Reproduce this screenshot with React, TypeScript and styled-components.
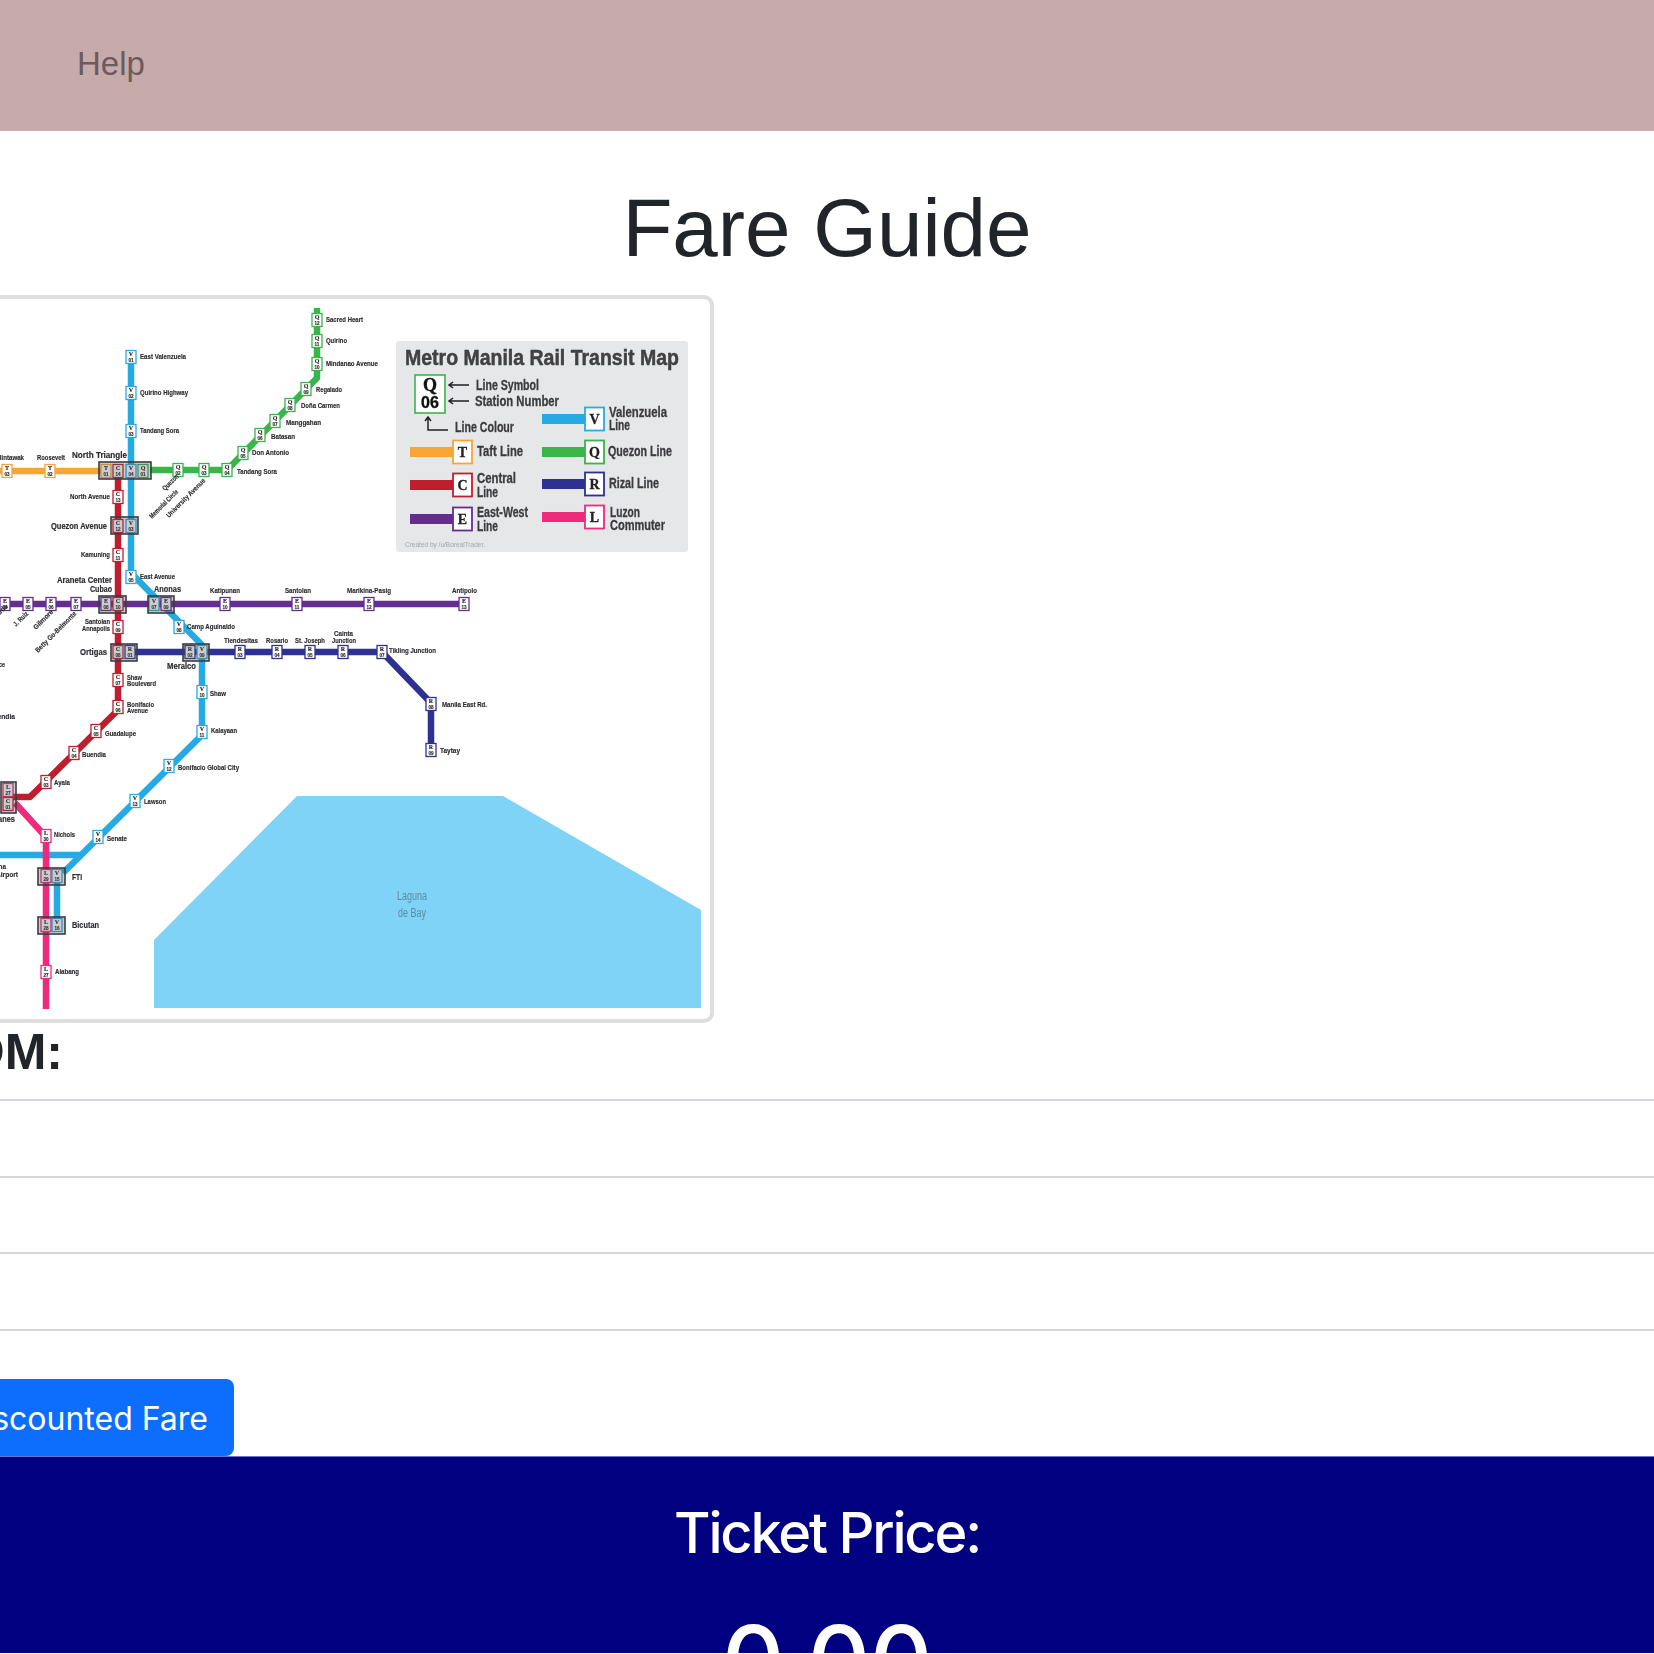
import React from 'react';
import styled, { createGlobalStyle } from 'styled-components';

const colors = {
  T: '#f9a533',
  C: '#be1e2d',
  E: '#662d91',
  V: '#27aae1',
  Q: '#39b54a',
  R: '#2e3192',
  L: '#ee2a7b',
};
type LineKey = keyof typeof colors;

const GlobalStyle = createGlobalStyle`
  html, body {
    margin: 0;
    padding: 0;
    background: #fff;
    overflow: hidden;
  }
`;

const Page = styled.div`
  width: 1654px;
  height: 1653px;
  overflow: hidden;
  display: flex;
  flex-direction: column;
  font-family: 'Inter', 'Liberation Sans', sans-serif;
  color: #212529;
`;

const Header = styled.header`
  flex: none;
  box-sizing: border-box;
  height: 131px;
  display: flex;
  align-items: center;
  padding: 0 0 4px 77px;
  background: #c7abab;
`;

const HelpLink = styled.a`
  font-family: 'Liberation Sans', sans-serif;
  font-size: 33px;
  color: #6d5a5b;
`;

const Title = styled.h1`
  flex: none;
  box-sizing: border-box;
  height: 164px;
  margin: 0;
  padding-top: 29px;
  display: flex;
  align-items: center;
  justify-content: center;
  font-family: 'Liberation Sans', sans-serif;
  font-size: 81.8px;
  font-weight: 400;
`;

const FormArea = styled.section`
  flex: none;
  width: 1748px;
  margin-left: -94px;
`;

const MapCard = styled.div`
  box-sizing: border-box;
  width: 808px;
  height: 728px;
  border: 4px solid #dedede;
  border-radius: 10px;
  background: #fff;
  overflow: hidden;
`;

const MapDrawing = styled.svg`
  display: block;
  width: 800px;
  height: 720px;
  filter: blur(0.4px);
`;

const MapLabel = styled.text<{ $size?: number; $weight?: number; $serif?: boolean; $color?: string }>`
  font-family: ${(p) => (p.$serif ? "'Liberation Serif', serif" : "'Liberation Sans', sans-serif")};
  font-size: ${(p) => p.$size ?? 7}px;
  font-weight: ${(p) => p.$weight ?? 700};
  fill: ${(p) => p.$color ?? '#2c2c30'};
  stroke: ${(p) => p.$color ?? '#2c2c30'};
  stroke-width: ${(p) => ((p.$weight ?? 700) > 400 ? (p.$size ?? 7) * 0.022 : 0)}px;
`;

const FromLabel = styled.label`
  display: flex;
  justify-content: flex-end;
  align-items: center;
  box-sizing: border-box;
  width: 157px;
  height: 76px;
  padding: 0 0 18px;
  font-family: 'Liberation Sans', sans-serif;
  font-size: 50px;
  font-weight: 700;
  line-height: 1;
`;

const FareField = styled.div<{ $closing?: boolean }>`
  height: ${(p) => (p.$closing ? 0 : 74.5)}px;
  border-top: 2px solid #d5d5df;
`;

const ButtonRow = styled.div`
  display: flex;
  justify-content: flex-end;
  width: 328px;
  margin-top: 48px;
`;

const DiscountButton = styled.button`
  height: 77px;
  padding: 2px 26px 0 27px;
  border: none;
  border-radius: 8px;
  background: #0d6efd;
  color: #fff;
  font-family: 'Inter', 'Liberation Sans', sans-serif;
  font-size: 32px;
  white-space: nowrap;
`;

const PriceBar = styled.footer`
  flex: 1;
  display: flex;
  flex-direction: column;
  align-items: center;
  border-top: 1px solid #6f6fc4;
  background: #000080;
  color: #fff;
`;

const PriceCaption = styled.h2`
  margin: 40px 0 0;
  font-size: 56px;
  font-weight: 550;
  line-height: 72px;
  letter-spacing: -2.2px;
`;

const PriceValue = styled.div`
  margin-top: 34px;
  font-size: 97px;
  font-weight: 500;
  line-height: 116px;
  letter-spacing: -0.5px;
`;

const paths: { key: LineKey; pts: string }[] = [
  { key: 'V', pts: '131,357 131,573 202,645 202,735 63,873' },
  { key: 'V', pts: '-10,855 80,855' },
  { key: 'V', pts: '57,873 57,925' },
  { key: 'T', pts: '-10,471 110,471' },
  { key: 'Q', pts: '317,308 317,378 227,470 150,470' },
  { key: 'E', pts: '-10,604 464,604' },
  { key: 'R', pts: '130,652 382,652 431,703 431,750' },
  { key: 'C', pts: '118,470 118,710 30,797 8,797' },
  { key: 'L', pts: '15,803 46,837 46,1009' },
];

const stations: [LineKey, string, number, number][] = [
  ['V', '01', 131, 357],
  ['V', '02', 131, 393],
  ['V', '03', 131, 431],
  ['V', '05', 131, 577],
  ['V', '08', 179, 627],
  ['V', '10', 202, 692],
  ['V', '11', 202, 732],
  ['V', '12', 169, 766],
  ['V', '13', 135, 801],
  ['V', '14', 98, 837],
  ['Q', '12', 317, 320],
  ['Q', '11', 317, 341],
  ['Q', '10', 317, 364],
  ['Q', '09', 306, 389],
  ['Q', '08', 290, 405],
  ['Q', '07', 275, 421],
  ['Q', '06', 260, 435],
  ['Q', '05', 243, 453],
  ['Q', '04', 227, 470],
  ['Q', '03', 204, 470],
  ['Q', '02', 178, 470],
  ['T', '03', 7, 471],
  ['T', '02', 50, 471],
  ['C', '13', 118, 497],
  ['C', '11', 118, 555],
  ['C', '09', 118, 627],
  ['C', '07', 118, 680],
  ['C', '06', 118, 707],
  ['C', '05', 96, 731],
  ['C', '04', 74, 753],
  ['C', '03', 46, 782],
  ['E', '04', 5, 604],
  ['E', '05', 28, 604],
  ['E', '06', 51, 604],
  ['E', '07', 76, 604],
  ['E', '10', 225, 604],
  ['E', '11', 297, 604],
  ['E', '12', 369, 604],
  ['E', '13', 464, 604],
  ['R', '03', 240, 652],
  ['R', '04', 277, 652],
  ['R', '05', 310, 652],
  ['R', '06', 343, 652],
  ['R', '07', 382, 652],
  ['R', '08', 431, 704],
  ['R', '09', 431, 750],
  ['L', '30', 46, 836],
  ['L', '27', 46, 972],
];

const interchanges: { box: [number, number, number, number]; tiles: [LineKey, string, number, number][] }[] = [
  {
    box: [99, 462, 52, 17],
    tiles: [
      ['T', '01', 106, 471],
      ['C', '14', 118, 471],
      ['V', '04', 131, 471],
      ['Q', '01', 143, 471],
    ],
  },
  {
    box: [111, 517, 27, 17],
    tiles: [
      ['C', '12', 118, 526],
      ['V', '03', 131, 526],
    ],
  },
  {
    box: [99, 596, 27, 17],
    tiles: [
      ['E', '08', 106, 604],
      ['C', '10', 118, 604],
    ],
  },
  {
    box: [148, 596, 26, 17],
    tiles: [
      ['V', '07', 154, 604],
      ['E', '09', 166, 604],
    ],
  },
  {
    box: [111, 644, 26, 17],
    tiles: [
      ['C', '08', 118, 652],
      ['R', '01', 130, 652],
    ],
  },
  {
    box: [183, 644, 26, 17],
    tiles: [
      ['R', '02', 190, 652],
      ['V', '09', 202, 652],
    ],
  },
  {
    box: [1, 782, 15, 31],
    tiles: [
      ['L', '27', 8, 790],
      ['C', '01', 8, 804],
    ],
  },
  {
    box: [38, 868, 27, 17],
    tiles: [
      ['L', '29', 46, 876],
      ['V', '15', 57, 876],
    ],
  },
  {
    box: [38, 917, 27, 17],
    tiles: [
      ['L', '28', 46, 925],
      ['V', '16', 57, 925],
    ],
  },
];

// text, x, baseline, width, font size
const labels: [string, number, number, number, number?][] = [
  ['East Valenzuela', 140, 359, 46],
  ['Quirino Highway', 140, 395, 48],
  ['Tandang Sora', 140, 433, 39],
  ['Sacred Heart', 326, 322, 37],
  ['Quirino', 326, 343, 21],
  ['Mindanao Avenue', 326, 366, 52],
  ['Regalado', 316, 392, 26],
  ['Doña Carmen', 301, 408, 39],
  ['Manggahan', 286, 425, 35],
  ['Batasan', 271, 439, 24],
  ['Don Antonio', 252, 455, 37],
  ['Tandang Sora', 237, 474, 40],
  ['Balintawak', -8, 460, 32],
  ['Roosevelt', 37, 460, 28],
  ['North Avenue', 70, 499, 40],
  ['Kamuning', 81, 557, 29],
  ['East Avenue', 140, 579, 35],
  ['Santolan', 85, 624, 25],
  ['Annapolis', 82, 631, 28],
  ['Camp Aguinaldo', 187, 629, 48],
  ['Katipunan', 210, 593, 30],
  ['Santolan', 285, 593, 26],
  ['Marikina-Pasig', 347, 593, 44],
  ['Antipolo', 452, 593, 25],
  ['Tiendesitas', 224, 643, 34],
  ['Rosario', 266, 643, 22],
  ['St. Joseph', 295, 643, 30],
  ['Cainta', 334, 636, 19],
  ['Junction', 332, 643, 24],
  ['Tikling Junction', 389, 653, 47],
  ['Manila East Rd.', 442, 707, 45],
  ['Taytay', 440, 753, 20],
  ['Shaw', 127, 680, 15],
  ['Boulevard', 127, 686, 29],
  ['Bonifacio', 127, 707, 27],
  ['Avenue', 127, 713, 21],
  ['Guadalupe', 105, 736, 31],
  ['Buendia', 82, 757, 24],
  ['Ayala', 54, 785, 16],
  ['Shaw', 210, 696, 16],
  ['Kalayaan', 211, 733, 26],
  ['Bonifacio Global City', 178, 770, 61],
  ['Lawson', 144, 804, 22],
  ['Senate', 107, 841, 20],
  ['Nichols', 54, 837, 21],
  ['Alabang', 55, 974, 24],
  ['Palace', -12, 667, 17],
  ['Mendia', -8, 719, 23],
  ['Arena', -12, 869, 18],
  ['Airport', -4, 877, 22],
  ['North Triangle', 72, 458, 55, 9],
  ['Quezon Avenue', 51, 529, 56, 9],
  ['Araneta Center', 57, 583, 55, 9],
  ['Cubao', 90, 592, 22, 9],
  ['Anonas', 154, 592, 27, 9],
  ['Ortigas', 80, 655, 27, 9],
  ['Meralco', 167, 669, 29, 9],
  ['Magallanes', -25, 822, 40, 9],
  ['FTI', 72, 880, 10, 9],
  ['Bicutan', 72, 928, 27, 9],
];

// text, start x, start y, width of the slanted run
const slanted: [string, number, number, number][] = [
  ['Quezon', 165, 491, 20],
  ['Memorial Circle', 152, 519, 38],
  ['University Avenue', 169, 518, 52],
  ['Legarda', -9, 624, 24],
  ['J. Ruiz', 16, 627, 18],
  ['Gilmore', 36, 630, 25],
  ['Betty Go-Belmonte', 38, 653, 55],
];

const legendKeys: { key: LineKey; x: number; y: number }[] = [
  { key: 'T', x: 410, y: 452 },
  { key: 'C', x: 410, y: 485 },
  { key: 'E', x: 410, y: 519 },
  { key: 'V', x: 542, y: 419 },
  { key: 'Q', x: 542, y: 452 },
  { key: 'R', x: 542, y: 484 },
  { key: 'L', x: 542, y: 517 },
];

const legendText: [string, number, number, number][] = [
  ['Line Symbol', 476, 390, 63],
  ['Station Number', 475, 406, 84],
  ['Line Colour', 455, 432, 59],
  ['Taft Line', 477, 456, 46],
  ['Central', 477, 483, 39],
  ['Line', 477, 497, 21],
  ['East-West', 477, 517, 51],
  ['Line', 477, 531, 21],
  ['Valenzuela', 609, 417, 58],
  ['Line', 609, 430, 21],
  ['Quezon Line', 608, 456, 64],
  ['Rizal Line', 609, 488, 50],
  ['Luzon', 610, 517, 30],
  ['Commuter', 610, 530, 55],
];

function Tile({ line, num, x, y }: { line: LineKey; num: string; x: number; y: number }) {
  return (
    <g>
      <rect x={x - 5} y={y - 6.5} width={10} height={13} fill="#fff" stroke={colors[line]} strokeWidth={1.3} />
      <MapLabel x={x} y={y - 0.6} textAnchor="middle" $size={6} $serif $color="#222">
        {line}
      </MapLabel>
      <MapLabel x={x} y={y + 5} textAnchor="middle" $size={4.6} $color="#222">
        {num}
      </MapLabel>
    </g>
  );
}

function Legend() {
  return (
    <g>
      <rect x={396} y={341} width={292} height={211} rx={3} fill="#e6e7e8" />
      <MapLabel x={405} y={365} textLength={274} lengthAdjust="spacingAndGlyphs" $size={22} $color="#414042">
        Metro Manila Rail Transit Map
      </MapLabel>
      <rect x={415} y={375} width={30} height={38} fill="#fff" stroke={colors.Q} strokeWidth={1.6} />
      <MapLabel x={430} y={391} textAnchor="middle" $size={18} $serif $color="#111">
        Q
      </MapLabel>
      <MapLabel x={430} y={408} textAnchor="middle" $size={16} $color="#111">
        06
      </MapLabel>
      <path
        d="M469 385H449M453 382l-4 3 4 3M469 401H449M453 398l-4 3 4 3M448 430H428V417M425 421l3-4 3 4"
        fill="none"
        stroke="#222"
        strokeWidth={1.5}
      />
      {legendKeys.map((k) => (
        <g key={k.key}>
          <rect x={k.x} y={k.y - 5} width={44} height={10} fill={colors[k.key]} />
          <rect x={k.x + 43} y={k.y - 11.5} width={19} height={23} fill="#fff" stroke={colors[k.key]} strokeWidth={1.8} />
          <MapLabel x={k.x + 52.5} y={k.y + 5} textAnchor="middle" $size={14} $serif $color="#222">
            {k.key}
          </MapLabel>
        </g>
      ))}
      {legendText.map(([t, x, y, w]) => (
        <MapLabel key={`${t}${x}${y}`} x={x} y={y} textLength={w} lengthAdjust="spacingAndGlyphs" $size={14} $color="#3c3c40">
          {t}
        </MapLabel>
      ))}
      <MapLabel x={405} y={547} textLength={80} lengthAdjust="spacingAndGlyphs" $size={6.5} $weight={400} $color="#a4a4a6">
        Created by /u/BorealTrader.
      </MapLabel>
    </g>
  );
}

function TransitMap() {
  return (
    <MapDrawing viewBox="-90 299 800 720">
      <polygon points="154,940 297,796 503,796 701,910 701,1008 154,1008" fill="#7fd3f7" />
      <MapLabel x={412} y={900} textLength={30} lengthAdjust="spacingAndGlyphs" textAnchor="middle" $size={12} $weight={400} $color="#5d8aa6">
        Laguna
      </MapLabel>
      <MapLabel x={412} y={917} textLength={28} lengthAdjust="spacingAndGlyphs" textAnchor="middle" $size={12} $weight={400} $color="#5d8aa6">
        de Bay
      </MapLabel>
      {paths.map((p) => (
        <polyline key={p.pts} points={p.pts} fill="none" stroke={colors[p.key]} strokeWidth={6.5} strokeLinejoin="round" />
      ))}
      {stations.map(([l, n, x, y]) => (
        <Tile key={`${l}${n}${x}`} line={l} num={n} x={x} y={y} />
      ))}
      {interchanges.map(({ box: [x, y, w, h], tiles }) => (
        <g key={`${x}-${y}`}>
          {tiles.map(([l, n, tx, ty]) => (
            <Tile key={`${l}${n}`} line={l} num={n} x={tx} y={ty} />
          ))}
          <rect x={x} y={y} width={w} height={h} fill="#55555f" fillOpacity={0.3} stroke="#3c3c40" strokeWidth={1.6} />
        </g>
      ))}
      {labels.map(([t, x, y, w, size]) => (
        <MapLabel key={`${t}${x}${y}`} x={x} y={y} textLength={w} lengthAdjust="spacingAndGlyphs" $size={size ?? 7}>
          {t}
        </MapLabel>
      ))}
      {slanted.map(([t, x, y, w]) => (
        <MapLabel
          key={t}
          x={x}
          y={y}
          transform={`rotate(-45 ${x} ${y})`}
          textLength={w}
          lengthAdjust="spacingAndGlyphs"
        >
          {t}
        </MapLabel>
      ))}
      <Legend />
    </MapDrawing>
  );
}

function App() {
  return (
    <>
      <GlobalStyle />
      <Page>
        <Header>
          <HelpLink>Help</HelpLink>
        </Header>
        <Title>Fare Guide</Title>
        <FormArea>
          <MapCard>
            <TransitMap />
          </MapCard>
          <FromLabel>FROM:</FromLabel>
          <FareField />
          <FareField />
          <FareField />
          <FareField $closing />
          <ButtonRow>
            <DiscountButton>Discounted Fare</DiscountButton>
          </ButtonRow>
        </FormArea>
        <PriceBar>
          <PriceCaption>Ticket Price:</PriceCaption>
          <PriceValue>0.00</PriceValue>
        </PriceBar>
      </Page>
    </>
  );
}

export default App;
